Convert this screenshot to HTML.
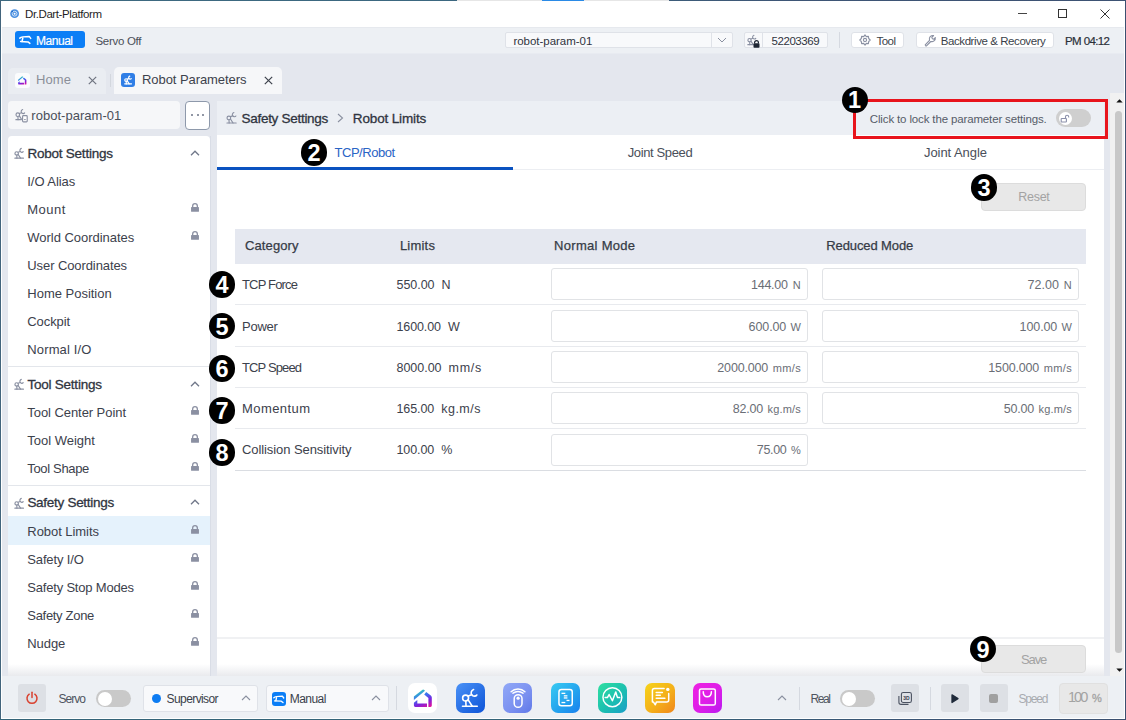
<!DOCTYPE html>
<html><head><meta charset="utf-8"><style>
html,body{margin:0;padding:0;width:1126px;height:720px;overflow:hidden;position:relative;font-family:"Liberation Sans", sans-serif;}
svg{position:absolute;overflow:visible}
</style></head><body>
<div style="position:absolute;left:0px;top:0px;width:1126px;height:720px;background:#e4e7ee"></div>
<div style="position:absolute;left:0px;top:0px;width:1126px;height:27px;background:#ffffff"></div>
<div style="position:absolute;left:0px;top:27px;width:1126px;height:26px;background:#edf0f4"></div>
<div style="position:absolute;left:0px;top:27px;width:1126px;height:1px;background:#e6e9ee"></div>
<div style="position:absolute;left:0px;top:53px;width:1126px;height:1px;background:#e8ebf1"></div>
<div style="position:absolute;left:0px;top:676px;width:1126px;height:44px;background:#edf0f4"></div>
<div style="position:absolute;left:0px;top:0px;width:1126px;height:1px;background:linear-gradient(90deg,#3d6a80,#3b6780 40%,#3e5676 70%,#3d5273)"></div>
<div style="position:absolute;left:457px;top:0px;width:85px;height:1px;background:#e6e6e6"></div>
<div style="position:absolute;left:542px;top:0px;width:42px;height:1px;background:#2a8ae6"></div>
<div style="position:absolute;left:584px;top:0px;width:85px;height:1px;background:#e6e6e6"></div>
<div style="position:absolute;left:0px;top:0px;width:1px;height:720px;background:#42647c"></div>
<div style="position:absolute;left:1125px;top:0px;width:1px;height:720px;background:#3b5070"></div>
<div style="position:absolute;left:0px;top:719px;width:1126px;height:1px;background:linear-gradient(90deg,#346478,#346478 50%,#3a5575 80%,#3b5070)"></div>
<div style="position:absolute;left:1px;top:718px;width:1124px;height:1px;background:#ffffff"></div>
<div style="position:absolute;left:1px;top:27px;width:1px;height:692px;background:#ffffff"></div>
<div style="position:absolute;left:1124px;top:27px;width:1px;height:692px;background:#ffffff"></div>
<svg style="left:9.5px;top:9px" width="10" height="10" viewBox="0 0 10 10"><circle cx="4.6" cy="4.7" r="4.4" fill="#4a8fe0"/><circle cx="4.6" cy="4.7" r="2.4" fill="none" stroke="#cfe2f8" stroke-width="1"/><circle cx="4.6" cy="4.7" r="1" fill="#fff"/><circle cx="2.2" cy="2.6" r="0.8" fill="#1a66c8"/></svg>
<div style="position:absolute;left:25.00px;top:9.00px;font-size:11.5px;line-height:11.5px;color:#1f1f1f;font-weight:400;white-space:pre;letter-spacing:-0.405px;">Dr.Dart-Platform</div>
<div style="position:absolute;left:1018px;top:12.5px;width:9px;height:1px;background:#444"></div>
<div style="position:absolute;left:1058px;top:9px;width:9px;height:9px;border:1px solid #333;box-sizing:border-box"></div>
<svg style="left:1100px;top:9px" width="10" height="10" viewBox="0 0 10 10"><path d="M0.5 0.5L9.5 9.5M9.5 0.5L0.5 9.5" stroke="#333" stroke-width="1"/></svg>
<div style="position:absolute;left:15px;top:31px;width:70px;height:17px;background:#0b7ef6;border-radius:3px"></div>
<div style="position:absolute;left:36.00px;top:35.00px;font-size:12px;line-height:12px;color:#ffffff;font-weight:400;white-space:pre;letter-spacing:-0.472px;-webkit-text-stroke:0.2px #fff">Manual</div>
<div style="position:absolute;left:95.50px;top:36.00px;font-size:11.5px;line-height:11.5px;color:#4a4f58;font-weight:400;white-space:pre;letter-spacing:-0.296px;">Servo Off</div>
<div style="position:absolute;left:505px;top:32px;width:228px;height:16px;background:#f8f9fb;border:1px solid #dfe2e8;box-sizing:border-box;border-radius:2px"></div>
<div style="position:absolute;left:711px;top:32px;width:1px;height:16px;background:#dfe2e8"></div>
<svg style="left:717px;top:37px" width="10" height="6" viewBox="0 0 10 6"><path d="M1 1L5 5L9 1" stroke="#8a90a0" stroke-width="1" fill="none"/></svg>
<div style="position:absolute;left:513.40px;top:36.00px;font-size:11.5px;line-height:11.5px;color:#2f3440;font-weight:400;white-space:pre;letter-spacing:-0.020px;">robot-param-01</div>
<div style="position:absolute;left:744px;top:32px;width:84px;height:16px;background:#f8f9fb;border:1px solid #dfe2e8;box-sizing:border-box;border-radius:2px"></div>
<div style="position:absolute;left:762px;top:32px;width:1px;height:16px;background:#dfe2e8"></div>
<div style="position:absolute;left:771.60px;top:36.00px;font-size:11.5px;line-height:11.5px;color:#2f3440;font-weight:400;white-space:pre;letter-spacing:-0.452px;">52203369</div>
<div style="position:absolute;left:839px;top:32px;width:1px;height:16px;background:#d5d9e0"></div>
<div style="position:absolute;left:851px;top:32px;width:53px;height:16px;background:#ffffff;border:1px solid #dfe2e8;box-sizing:border-box;border-radius:3px"></div>
<div style="position:absolute;left:876.40px;top:36.00px;font-size:11.5px;line-height:11.5px;color:#3a3f4a;font-weight:400;white-space:pre;letter-spacing:-0.499px;">Tool</div>
<div style="position:absolute;left:916px;top:32px;width:138px;height:16px;background:#ffffff;border:1px solid #dfe2e8;box-sizing:border-box;border-radius:3px"></div>
<div style="position:absolute;left:940.80px;top:36.00px;font-size:11.5px;line-height:11.5px;color:#3a3f4a;font-weight:400;white-space:pre;letter-spacing:-0.428px;">Backdrive &amp; Recovery</div>
<div style="position:absolute;left:1065.00px;top:36.00px;font-size:11.5px;line-height:11.5px;color:#2a2f38;font-weight:400;white-space:pre;letter-spacing:-0.603px;-webkit-text-stroke:0.2px #2a2f38">PM 04:12</div>
<div style="position:absolute;left:8px;top:68px;width:98px;height:26px;background:#eaedf2;border-radius:5px 5px 0 0"></div>
<div style="position:absolute;left:110px;top:74px;width:1px;height:13px;background:#d3d7de"></div>
<div style="position:absolute;left:114px;top:67px;width:168px;height:27px;background:#f6f7f9;border-radius:5px 5px 0 0"></div>
<div style="position:absolute;left:36.00px;top:73.00px;font-size:13px;line-height:13px;color:#8a8f99;font-weight:400;white-space:pre;letter-spacing:0.107px;">Home</div>
<div style="position:absolute;left:142.00px;top:73.00px;font-size:13px;line-height:13px;color:#3d424c;font-weight:400;white-space:pre;letter-spacing:-0.066px;">Robot Parameters</div>
<div style="position:absolute;left:120.7px;top:73px;width:14px;height:14px;background:#2f7ee6;border-radius:3px"></div>
<div style="position:absolute;left:8px;top:101px;width:172px;height:28px;background:#f6f7f9;border-radius:4px"></div>
<div style="position:absolute;left:31.30px;top:109.00px;font-size:13px;line-height:13px;color:#4a4f5a;font-weight:400;white-space:pre;letter-spacing:0.031px;">robot-param-01</div>
<div style="position:absolute;left:185px;top:101px;width:25px;height:29px;background:#ffffff;border:1px solid #8e99ab;box-sizing:border-box;border-radius:4px"></div>
<div style="position:absolute;left:8px;top:136px;width:202px;height:540px;background:#ffffff;border-radius:4px 4px 0 0"></div>
<div style="position:absolute;left:27.40px;top:147.00px;font-size:13.5px;line-height:13.5px;color:#2f3440;font-weight:400;white-space:pre;letter-spacing:-0.227px;-webkit-text-stroke:0.3px #2f3440">Robot Settings</div>
<div style="position:absolute;left:27.40px;top:378.00px;font-size:13.5px;line-height:13.5px;color:#2f3440;font-weight:400;white-space:pre;letter-spacing:-0.225px;-webkit-text-stroke:0.3px #2f3440">Tool Settings</div>
<div style="position:absolute;left:27.40px;top:496.00px;font-size:13.5px;line-height:13.5px;color:#2f3440;font-weight:400;white-space:pre;letter-spacing:-0.286px;-webkit-text-stroke:0.3px #2f3440">Safety Settings</div>
<div style="position:absolute;left:8px;top:516px;width:202px;height:29px;background:#e5f2fc"></div>
<div style="position:absolute;left:27.30px;top:175.00px;font-size:13px;line-height:13px;color:#3c414c;font-weight:400;white-space:pre;letter-spacing:-0.051px;">I/O Alias</div>
<div style="position:absolute;left:27.30px;top:203.00px;font-size:13px;line-height:13px;color:#3c414c;font-weight:400;white-space:pre;letter-spacing:0.467px;">Mount</div>
<svg style="left:190px;top:203.2px" width="10" height="10" viewBox="0 0 10 10"><path d="M2.65 4.3V3A2.35 2.35 0 0 1 7.35 3V4.3" stroke="#8b90a2" stroke-width="1.3" fill="none"/><rect x="1.05" y="4.1" width="7.9" height="4.7" rx="0.6" fill="#8b90a2"/></svg>
<div style="position:absolute;left:27.30px;top:231.00px;font-size:13px;line-height:13px;color:#3c414c;font-weight:400;white-space:pre;letter-spacing:-0.026px;">World Coordinates</div>
<svg style="left:190px;top:231.2px" width="10" height="10" viewBox="0 0 10 10"><path d="M2.65 4.3V3A2.35 2.35 0 0 1 7.35 3V4.3" stroke="#8b90a2" stroke-width="1.3" fill="none"/><rect x="1.05" y="4.1" width="7.9" height="4.7" rx="0.6" fill="#8b90a2"/></svg>
<div style="position:absolute;left:27.30px;top:259.00px;font-size:13px;line-height:13px;color:#3c414c;font-weight:400;white-space:pre;letter-spacing:-0.090px;">User Coordinates</div>
<div style="position:absolute;left:27.30px;top:287.00px;font-size:13px;line-height:13px;color:#3c414c;font-weight:400;white-space:pre;letter-spacing:-0.012px;">Home Position</div>
<div style="position:absolute;left:27.30px;top:315.00px;font-size:13px;line-height:13px;color:#3c414c;font-weight:400;white-space:pre;letter-spacing:-0.091px;">Cockpit</div>
<div style="position:absolute;left:27.30px;top:343.00px;font-size:13px;line-height:13px;color:#3c414c;font-weight:400;white-space:pre;letter-spacing:0.129px;">Normal I/O</div>
<div style="position:absolute;left:27.30px;top:406.00px;font-size:13px;line-height:13px;color:#3c414c;font-weight:400;white-space:pre;letter-spacing:-0.064px;">Tool Center Point</div>
<svg style="left:190px;top:406.2px" width="10" height="10" viewBox="0 0 10 10"><path d="M2.65 4.3V3A2.35 2.35 0 0 1 7.35 3V4.3" stroke="#8b90a2" stroke-width="1.3" fill="none"/><rect x="1.05" y="4.1" width="7.9" height="4.7" rx="0.6" fill="#8b90a2"/></svg>
<div style="position:absolute;left:27.30px;top:434.00px;font-size:13px;line-height:13px;color:#3c414c;font-weight:400;white-space:pre;letter-spacing:-0.019px;">Tool Weight</div>
<svg style="left:190px;top:434.3px" width="10" height="10" viewBox="0 0 10 10"><path d="M2.65 4.3V3A2.35 2.35 0 0 1 7.35 3V4.3" stroke="#8b90a2" stroke-width="1.3" fill="none"/><rect x="1.05" y="4.1" width="7.9" height="4.7" rx="0.6" fill="#8b90a2"/></svg>
<div style="position:absolute;left:27.30px;top:462.00px;font-size:13px;line-height:13px;color:#3c414c;font-weight:400;white-space:pre;letter-spacing:-0.339px;">Tool Shape</div>
<svg style="left:190px;top:462.4px" width="10" height="10" viewBox="0 0 10 10"><path d="M2.65 4.3V3A2.35 2.35 0 0 1 7.35 3V4.3" stroke="#8b90a2" stroke-width="1.3" fill="none"/><rect x="1.05" y="4.1" width="7.9" height="4.7" rx="0.6" fill="#8b90a2"/></svg>
<div style="position:absolute;left:27.30px;top:525.00px;font-size:13px;line-height:13px;color:#3c414c;font-weight:400;white-space:pre;letter-spacing:-0.050px;">Robot Limits</div>
<svg style="left:190px;top:525.0px" width="10" height="10" viewBox="0 0 10 10"><path d="M2.65 4.3V3A2.35 2.35 0 0 1 7.35 3V4.3" stroke="#8b90a2" stroke-width="1.3" fill="none"/><rect x="1.05" y="4.1" width="7.9" height="4.7" rx="0.6" fill="#8b90a2"/></svg>
<div style="position:absolute;left:27.30px;top:553.00px;font-size:13px;line-height:13px;color:#3c414c;font-weight:400;white-space:pre;letter-spacing:-0.145px;">Safety I/O</div>
<svg style="left:190px;top:553.1px" width="10" height="10" viewBox="0 0 10 10"><path d="M2.65 4.3V3A2.35 2.35 0 0 1 7.35 3V4.3" stroke="#8b90a2" stroke-width="1.3" fill="none"/><rect x="1.05" y="4.1" width="7.9" height="4.7" rx="0.6" fill="#8b90a2"/></svg>
<div style="position:absolute;left:27.30px;top:581.00px;font-size:13px;line-height:13px;color:#3c414c;font-weight:400;white-space:pre;letter-spacing:-0.196px;">Safety Stop Modes</div>
<svg style="left:190px;top:581.2px" width="10" height="10" viewBox="0 0 10 10"><path d="M2.65 4.3V3A2.35 2.35 0 0 1 7.35 3V4.3" stroke="#8b90a2" stroke-width="1.3" fill="none"/><rect x="1.05" y="4.1" width="7.9" height="4.7" rx="0.6" fill="#8b90a2"/></svg>
<div style="position:absolute;left:27.30px;top:609.00px;font-size:13px;line-height:13px;color:#3c414c;font-weight:400;white-space:pre;letter-spacing:-0.310px;">Safety Zone</div>
<svg style="left:190px;top:609.3px" width="10" height="10" viewBox="0 0 10 10"><path d="M2.65 4.3V3A2.35 2.35 0 0 1 7.35 3V4.3" stroke="#8b90a2" stroke-width="1.3" fill="none"/><rect x="1.05" y="4.1" width="7.9" height="4.7" rx="0.6" fill="#8b90a2"/></svg>
<div style="position:absolute;left:27.30px;top:637.00px;font-size:13px;line-height:13px;color:#3c414c;font-weight:400;white-space:pre;letter-spacing:-0.077px;">Nudge</div>
<svg style="left:190px;top:637.4px" width="10" height="10" viewBox="0 0 10 10"><path d="M2.65 4.3V3A2.35 2.35 0 0 1 7.35 3V4.3" stroke="#8b90a2" stroke-width="1.3" fill="none"/><rect x="1.05" y="4.1" width="7.9" height="4.7" rx="0.6" fill="#8b90a2"/></svg>
<div style="position:absolute;left:8px;top:366px;width:202px;height:1px;background:#e3e6eb"></div>
<div style="position:absolute;left:8px;top:485px;width:202px;height:1px;background:#e3e6eb"></div>
<div style="position:absolute;left:217px;top:101px;width:887px;height:575px;background:#ffffff"></div>
<div style="position:absolute;left:210px;top:136px;width:1px;height:540px;background:#d9dde6"></div>
<div style="position:absolute;left:217px;top:101px;width:887px;height:34px;background:#eceff4"></div>
<div style="position:absolute;left:241.50px;top:112.00px;font-size:13.5px;line-height:13.5px;color:#2f3440;font-weight:400;white-space:pre;letter-spacing:-0.286px;-webkit-text-stroke:0.3px #2f3440">Safety Settings</div>
<div style="position:absolute;left:352.80px;top:112.00px;font-size:13.5px;line-height:13.5px;color:#2f3440;font-weight:400;white-space:pre;letter-spacing:-0.139px;-webkit-text-stroke:0.3px #2f3440">Robot Limits</div>
<svg style="left:337px;top:113px" width="7" height="10" viewBox="0 0 7 10"><path d="M1 1L5.5 5L1 9" stroke="#8a90a0" stroke-width="1.1" fill="none"/></svg>
<div style="position:absolute;left:853px;top:99px;width:255px;height:40px;border:3px solid #e8141c;box-sizing:border-box"></div>
<div style="position:absolute;left:869.80px;top:114.00px;font-size:11.5px;line-height:11.5px;color:#565c68;font-weight:400;white-space:pre;letter-spacing:-0.143px;">Click to lock the parameter settings.</div>
<div style="position:absolute;left:1056px;top:109px;width:35px;height:18px;background:#cfcfcf;border-radius:9px"></div>
<div style="position:absolute;left:1058.9px;top:111.5px;width:13.2px;height:13.2px;background:#ffffff;border-radius:50%"></div>
<div style="position:absolute;left:334.50px;top:146.00px;font-size:13px;line-height:13px;color:#2a64c5;font-weight:400;white-space:pre;letter-spacing:-0.475px;">TCP/Robot</div>
<div style="position:absolute;left:627.70px;top:146.00px;font-size:13px;line-height:13px;color:#4a4f5a;font-weight:400;white-space:pre;letter-spacing:-0.366px;">Joint Speed</div>
<div style="position:absolute;left:924.00px;top:146.00px;font-size:13px;line-height:13px;color:#4a4f5a;font-weight:400;white-space:pre;letter-spacing:-0.060px;">Joint Angle</div>
<div style="position:absolute;left:217px;top:169px;width:887px;height:1px;background:#eceef2"></div>
<div style="position:absolute;left:217px;top:167px;width:296px;height:2.5px;background:#0a52c0"></div>
<div style="position:absolute;left:981px;top:183px;width:105px;height:28px;background:#e8e8e8;border:1px solid #dcdcdc;box-sizing:border-box;border-radius:4px"></div>
<div style="position:absolute;left:1018.30px;top:191.00px;font-size:12.5px;line-height:12.5px;color:#a3a3a3;font-weight:400;white-space:pre;letter-spacing:-0.289px;">Reset</div>
<div style="position:absolute;left:235px;top:229px;width:851px;height:35px;background:#e5e8f0"></div>
<div style="position:absolute;left:245.00px;top:239.00px;font-size:13px;line-height:13px;color:#363b46;font-weight:400;white-space:pre;letter-spacing:0.107px;-webkit-text-stroke:0.25px #363b46">Category</div>
<div style="position:absolute;left:399.90px;top:239.00px;font-size:13px;line-height:13px;color:#363b46;font-weight:400;white-space:pre;letter-spacing:0.210px;-webkit-text-stroke:0.25px #363b46">Limits</div>
<div style="position:absolute;left:554.10px;top:239.00px;font-size:13px;line-height:13px;color:#363b46;font-weight:400;white-space:pre;letter-spacing:0.297px;-webkit-text-stroke:0.25px #363b46">Normal Mode</div>
<div style="position:absolute;left:826.30px;top:239.00px;font-size:13px;line-height:13px;color:#363b46;font-weight:400;white-space:pre;letter-spacing:-0.106px;-webkit-text-stroke:0.25px #363b46">Reduced Mode</div>
<div style="position:absolute;left:235px;top:304px;width:851px;height:1px;background:#e8eaee"></div>
<div style="position:absolute;left:235px;top:346px;width:851px;height:1px;background:#e8eaee"></div>
<div style="position:absolute;left:235px;top:387px;width:851px;height:1px;background:#e8eaee"></div>
<div style="position:absolute;left:235px;top:428px;width:851px;height:1px;background:#e8eaee"></div>
<div style="position:absolute;left:235px;top:470px;width:851px;height:1px;background:#dadde2"></div>
<div style="position:absolute;left:242.00px;top:278.00px;font-size:13px;line-height:13px;color:#3c414c;font-weight:400;white-space:pre;letter-spacing:-0.826px;">TCP Force</div>
<div style="position:absolute;left:396.50px;top:279.00px;font-size:12.5px;line-height:12.5px;color:#3c414c;font-weight:400;white-space:pre;letter-spacing:-0.046px;">550.00</div>
<div style="position:absolute;left:441.50px;top:279.00px;font-size:12.5px;line-height:12.5px;color:#3c414c;font-weight:400;white-space:pre;">N</div>
<div style="position:absolute;left:551px;top:268px;width:257px;height:32px;background:#fff;border:1px solid #e1e3e6;box-sizing:border-box;border-radius:3px"></div>
<div style="position:absolute;left:792.86px;top:280.00px;font-size:11px;line-height:11px;color:#6a6e76;font-weight:400;white-space:pre;">N</div>
<div style="position:absolute;left:751.06px;top:279.00px;font-size:12.5px;line-height:12.5px;color:#6a6e76;font-weight:400;white-space:pre;letter-spacing:-0.286px;">144.00</div>
<div style="position:absolute;left:822px;top:268px;width:257px;height:32px;background:#fff;border:1px solid #e1e3e6;box-sizing:border-box;border-radius:3px"></div>
<div style="position:absolute;left:1063.86px;top:280.00px;font-size:11px;line-height:11px;color:#6a6e76;font-weight:400;white-space:pre;">N</div>
<div style="position:absolute;left:1027.57px;top:279.00px;font-size:12.5px;line-height:12.5px;color:#6a6e76;font-weight:400;white-space:pre;">72.00</div>
<div style="position:absolute;left:242.00px;top:320.00px;font-size:13px;line-height:13px;color:#3c414c;font-weight:400;white-space:pre;letter-spacing:-0.262px;">Power</div>
<div style="position:absolute;left:396.50px;top:321.00px;font-size:12.5px;line-height:12.5px;color:#3c414c;font-weight:400;white-space:pre;letter-spacing:-0.131px;">1600.00</div>
<div style="position:absolute;left:447.90px;top:321.00px;font-size:12.5px;line-height:12.5px;color:#3c414c;font-weight:400;white-space:pre;">W</div>
<div style="position:absolute;left:551px;top:310px;width:257px;height:32px;background:#fff;border:1px solid #e1e3e6;box-sizing:border-box;border-radius:3px"></div>
<div style="position:absolute;left:790.42px;top:322.00px;font-size:11px;line-height:11px;color:#6a6e76;font-weight:400;white-space:pre;">W</div>
<div style="position:absolute;left:748.62px;top:321.00px;font-size:12.5px;line-height:12.5px;color:#6a6e76;font-weight:400;white-space:pre;letter-spacing:-0.106px;">600.00</div>
<div style="position:absolute;left:822px;top:310px;width:257px;height:32px;background:#fff;border:1px solid #e1e3e6;box-sizing:border-box;border-radius:3px"></div>
<div style="position:absolute;left:1061.42px;top:322.00px;font-size:11px;line-height:11px;color:#6a6e76;font-weight:400;white-space:pre;">W</div>
<div style="position:absolute;left:1019.62px;top:321.00px;font-size:12.5px;line-height:12.5px;color:#6a6e76;font-weight:400;white-space:pre;letter-spacing:-0.106px;">100.00</div>
<div style="position:absolute;left:242.00px;top:361.00px;font-size:13px;line-height:13px;color:#3c414c;font-weight:400;white-space:pre;letter-spacing:-0.871px;">TCP Speed</div>
<div style="position:absolute;left:396.50px;top:362.00px;font-size:12.5px;line-height:12.5px;color:#3c414c;font-weight:400;white-space:pre;letter-spacing:-0.031px;">8000.00</div>
<div style="position:absolute;left:448.50px;top:362.00px;font-size:12.5px;line-height:12.5px;color:#3c414c;font-weight:400;white-space:pre;letter-spacing:0.717px;">mm/s</div>
<div style="position:absolute;left:551px;top:351px;width:257px;height:32px;background:#fff;border:1px solid #e1e3e6;box-sizing:border-box;border-radius:3px"></div>
<div style="position:absolute;left:772.80px;top:363.00px;font-size:11px;line-height:11px;color:#6a6e76;font-weight:400;white-space:pre;letter-spacing:0.372px;">mm/s</div>
<div style="position:absolute;left:717.30px;top:362.00px;font-size:12.5px;line-height:12.5px;color:#6a6e76;font-weight:400;white-space:pre;letter-spacing:-0.162px;">2000.000</div>
<div style="position:absolute;left:822px;top:351px;width:257px;height:32px;background:#fff;border:1px solid #e1e3e6;box-sizing:border-box;border-radius:3px"></div>
<div style="position:absolute;left:1043.80px;top:363.00px;font-size:11px;line-height:11px;color:#6a6e76;font-weight:400;white-space:pre;letter-spacing:0.372px;">mm/s</div>
<div style="position:absolute;left:988.30px;top:362.00px;font-size:12.5px;line-height:12.5px;color:#6a6e76;font-weight:400;white-space:pre;letter-spacing:-0.162px;">1500.000</div>
<div style="position:absolute;left:242.00px;top:402.00px;font-size:13px;line-height:13px;color:#3c414c;font-weight:400;white-space:pre;letter-spacing:0.426px;">Momentum</div>
<div style="position:absolute;left:396.50px;top:403.00px;font-size:12.5px;line-height:12.5px;color:#3c414c;font-weight:400;white-space:pre;letter-spacing:-0.106px;">165.00</div>
<div style="position:absolute;left:441.20px;top:403.00px;font-size:12.5px;line-height:12.5px;color:#3c414c;font-weight:400;white-space:pre;letter-spacing:0.498px;">kg.m/s</div>
<div style="position:absolute;left:551px;top:392px;width:257px;height:32px;background:#fff;border:1px solid #e1e3e6;box-sizing:border-box;border-radius:3px"></div>
<div style="position:absolute;left:767.50px;top:404.00px;font-size:11px;line-height:11px;color:#6a6e76;font-weight:400;white-space:pre;letter-spacing:0.181px;">kg.m/s</div>
<div style="position:absolute;left:732.80px;top:403.00px;font-size:12.5px;line-height:12.5px;color:#6a6e76;font-weight:400;white-space:pre;letter-spacing:-0.195px;">82.00</div>
<div style="position:absolute;left:822px;top:392px;width:257px;height:32px;background:#fff;border:1px solid #e1e3e6;box-sizing:border-box;border-radius:3px"></div>
<div style="position:absolute;left:1038.50px;top:404.00px;font-size:11px;line-height:11px;color:#6a6e76;font-weight:400;white-space:pre;letter-spacing:0.181px;">kg.m/s</div>
<div style="position:absolute;left:1003.80px;top:403.00px;font-size:12.5px;line-height:12.5px;color:#6a6e76;font-weight:400;white-space:pre;letter-spacing:-0.195px;">50.00</div>
<div style="position:absolute;left:242.00px;top:443.00px;font-size:13px;line-height:13px;color:#3c414c;font-weight:400;white-space:pre;letter-spacing:-0.083px;">Collision Sensitivity</div>
<div style="position:absolute;left:396.50px;top:444.00px;font-size:12.5px;line-height:12.5px;color:#3c414c;font-weight:400;white-space:pre;letter-spacing:-0.106px;">100.00</div>
<div style="position:absolute;left:441.20px;top:444.00px;font-size:12.5px;line-height:12.5px;color:#3c414c;font-weight:400;white-space:pre;">%</div>
<div style="position:absolute;left:551px;top:434px;width:257px;height:32px;background:#fff;border:1px solid #e1e3e6;box-sizing:border-box;border-radius:3px"></div>
<div style="position:absolute;left:791.02px;top:445.00px;font-size:11px;line-height:11px;color:#6a6e76;font-weight:400;white-space:pre;">%</div>
<div style="position:absolute;left:756.82px;top:444.00px;font-size:12.5px;line-height:12.5px;color:#6a6e76;font-weight:400;white-space:pre;letter-spacing:-0.320px;">75.00</div>
<div style="position:absolute;left:1110px;top:93px;width:14px;height:583px;background:#f1f1f1"></div>
<div style="position:absolute;left:1115px;top:111px;width:7px;height:542px;background:#c8c8c8;border-radius:4px"></div>
<svg style="left:1115.5px;top:99px" width="7" height="4" viewBox="0 0 7 4"><path d="M0.3 3.6L3.5 0.3L6.7 3.6Z" fill="#111"/></svg>
<svg style="left:1115.5px;top:668px" width="7" height="4" viewBox="0 0 7 4"><path d="M0.3 0.4L3.5 3.7L6.7 0.4Z" fill="#111"/></svg>
<div style="position:absolute;left:217px;top:637px;width:887px;height:2px;background:#f0f1f3"></div>
<div style="position:absolute;left:217px;top:664px;width:887px;height:12px;background:linear-gradient(rgba(233,234,237,0),#e9eaed)"></div>
<div style="position:absolute;left:8px;top:664px;width:202px;height:12px;background:linear-gradient(rgba(233,234,237,0),#e9eaed)"></div>
<div style="position:absolute;left:981px;top:645px;width:105px;height:28px;background:#e8e8e8;border:1px solid #dcdcdc;box-sizing:border-box;border-radius:4px"></div>
<div style="position:absolute;left:1021.00px;top:653.00px;font-size:13px;line-height:13px;color:#a3a3a3;font-weight:400;white-space:pre;letter-spacing:-1.111px;">Save</div>
<div style="position:absolute;left:18px;top:684px;width:28px;height:28px;background:#dde0e5;border-radius:3px"></div>
<svg style="left:25px;top:691px" width="14" height="14" viewBox="0 0 14 14"><path d="M4.2 3.2A5 5 0 1 0 9.8 3.2" stroke="#d9412f" stroke-width="1.5" fill="none" stroke-linecap="round"/><path d="M7 1.2V6.5" stroke="#d9412f" stroke-width="1.5" stroke-linecap="round"/></svg>
<div style="position:absolute;left:58.50px;top:693.00px;font-size:12px;line-height:12px;color:#4f5560;font-weight:400;white-space:pre;letter-spacing:-0.962px;">Servo</div>
<div style="position:absolute;left:96px;top:690px;width:35px;height:17px;background:#c9c9c9;border-radius:9px"></div>
<div style="position:absolute;left:97.5px;top:691.5px;width:14px;height:14px;background:#fff;border-radius:7px"></div>
<div style="position:absolute;left:143px;top:684.5px;width:115px;height:27px;background:#f8f9fb;border:1px solid #dfe2e8;box-sizing:border-box;border-radius:3px"></div>
<div style="position:absolute;left:152px;top:694.2px;width:9px;height:9px;background:#0d7cf2;border-radius:5px"></div>
<div style="position:absolute;left:166.60px;top:693.00px;font-size:12px;line-height:12px;color:#3a3f4a;font-weight:400;white-space:pre;letter-spacing:-0.595px;">Supervisor</div>
<div style="position:absolute;left:266px;top:684.5px;width:122.5px;height:27px;background:#f8f9fb;border:1px solid #dfe2e8;box-sizing:border-box;border-radius:3px"></div>
<div style="position:absolute;left:272.2px;top:691.5px;width:14px;height:14px;background:#0b7ef6;border-radius:3px"></div>
<div style="position:absolute;left:289.80px;top:693.00px;font-size:12px;line-height:12px;color:#3a3f4a;font-weight:400;white-space:pre;letter-spacing:-0.552px;">Manual</div>
<svg style="left:241px;top:695px" width="10" height="6" viewBox="0 0 10 6"><path d="M1 5L5 1L9 5" stroke="#8a90a0" stroke-width="1.1" fill="none"/></svg>
<svg style="left:371px;top:695px" width="10" height="6" viewBox="0 0 10 6"><path d="M1 5L5 1L9 5" stroke="#8a90a0" stroke-width="1.1" fill="none"/></svg>
<div style="position:absolute;left:396px;top:686px;width:1px;height:24px;background:#d5d9e0"></div>
<div style="position:absolute;left:408px;top:683.3px;width:29.3px;height:29.5px;background:#ffffff;border-radius:7px"></div>
<div style="position:absolute;left:455.8px;top:683.3px;width:29.3px;height:29.5px;background:linear-gradient(135deg,#4a92f7,#1f66e0 70%,#0f55d8);border-radius:7px"></div>
<div style="position:absolute;left:503px;top:683.3px;width:29.3px;height:29.5px;background:linear-gradient(135deg,#91a8f7,#7a90f0 60%,#5f78e8);border-radius:7px"></div>
<div style="position:absolute;left:551px;top:683.3px;width:29.3px;height:29.5px;background:linear-gradient(135deg,#38cbf2,#22a0ee 60%,#1a80ee);border-radius:7px"></div>
<div style="position:absolute;left:598px;top:683.3px;width:29.3px;height:29.5px;background:linear-gradient(135deg,#2fe0a0,#1cbfb0 55%,#1a9ec8);border-radius:7px"></div>
<div style="position:absolute;left:645.3px;top:683.3px;width:29.3px;height:29.5px;background:linear-gradient(135deg,#f6d41a,#f4b01a 55%,#f0861c);border-radius:7px"></div>
<div style="position:absolute;left:692.8px;top:683.3px;width:29.3px;height:29.5px;background:linear-gradient(135deg,#ee22e2,#dd1ee8 55%,#b91af0);border-radius:7px"></div>
<svg style="left:777px;top:695px" width="10" height="6" viewBox="0 0 10 6"><path d="M1 5L5 1L9 5" stroke="#8a90a0" stroke-width="1.1" fill="none"/></svg>
<div style="position:absolute;left:799px;top:687px;width:1px;height:23px;background:#d5d9e0"></div>
<div style="position:absolute;left:810.50px;top:693.00px;font-size:12px;line-height:12px;color:#4f5560;font-weight:400;white-space:pre;letter-spacing:-1.394px;">Real</div>
<div style="position:absolute;left:840px;top:690px;width:35px;height:17px;background:#c9c9c9;border-radius:9px"></div>
<div style="position:absolute;left:841.5px;top:691.5px;width:14px;height:14px;background:#fff;border-radius:7px"></div>
<div style="position:absolute;left:891px;top:684px;width:28px;height:28px;background:#dde0e5;border-radius:3px"></div>
<div style="position:absolute;left:930px;top:687px;width:1px;height:23px;background:#d5d9e0"></div>
<div style="position:absolute;left:941px;top:684px;width:28px;height:28px;background:#dde0e5;border-radius:3px"></div>
<svg style="left:950px;top:692.5px" width="10" height="12" viewBox="0 0 10 12"><path d="M2 1.9L8 5.6L2 9.5Z" fill="#1f2a3a" stroke="#1f2a3a" stroke-width="1.3" stroke-linejoin="round"/></svg>
<div style="position:absolute;left:980px;top:684px;width:28px;height:28px;background:#dde0e5;border-radius:3px"></div>
<div style="position:absolute;left:989px;top:694px;width:9px;height:9px;background:#a0a0a0;border-radius:2px"></div>
<div style="position:absolute;left:1018.50px;top:693.00px;font-size:12px;line-height:12px;color:#a8abb0;font-weight:400;white-space:pre;letter-spacing:-1.175px;">Speed</div>
<div style="position:absolute;left:1059px;top:683px;width:48.5px;height:31px;background:#e8e8e8;border:1px solid #e0e0e0;box-sizing:border-box;border-radius:4px"></div>
<div style="position:absolute;left:1068.00px;top:690.00px;font-size:14.5px;line-height:14.5px;color:#a3a3a3;font-weight:400;white-space:pre;letter-spacing:-1.997px;">100</div>
<div style="position:absolute;left:1092.00px;top:693.00px;font-size:11px;line-height:11px;color:#a3a3a3;font-weight:400;white-space:pre;-webkit-text-stroke:0.3px #a3a3a3">%</div>
<div style="position:absolute;left:841.5px;top:86.60000000000001px;width:26.4px;height:26.6px;background:#000;border-radius:50%"></div>
<div style="position:absolute;left:848.10px;top:89.00px;font-size:23.5px;line-height:23.5px;color:#ffffff;font-weight:700;white-space:pre;">1</div>
<div style="position:absolute;left:300.8px;top:139.2px;width:26.4px;height:26.6px;background:#000;border-radius:50%"></div>
<div style="position:absolute;left:307.40px;top:142.00px;font-size:23.5px;line-height:23.5px;color:#ffffff;font-weight:700;white-space:pre;">2</div>
<div style="position:absolute;left:970.8px;top:174.2px;width:26.4px;height:26.6px;background:#000;border-radius:50%"></div>
<div style="position:absolute;left:977.40px;top:177.00px;font-size:23.5px;line-height:23.5px;color:#ffffff;font-weight:700;white-space:pre;">3</div>
<div style="position:absolute;left:208.8px;top:271.2px;width:26.4px;height:26.6px;background:#000;border-radius:50%"></div>
<div style="position:absolute;left:215.40px;top:274.00px;font-size:23.5px;line-height:23.5px;color:#ffffff;font-weight:700;white-space:pre;">4</div>
<div style="position:absolute;left:208.8px;top:312.8px;width:26.4px;height:26.6px;background:#000;border-radius:50%"></div>
<div style="position:absolute;left:215.40px;top:316.00px;font-size:23.5px;line-height:23.5px;color:#ffffff;font-weight:700;white-space:pre;">5</div>
<div style="position:absolute;left:208.8px;top:355.2px;width:26.4px;height:26.6px;background:#000;border-radius:50%"></div>
<div style="position:absolute;left:215.40px;top:358.00px;font-size:23.5px;line-height:23.5px;color:#ffffff;font-weight:700;white-space:pre;">6</div>
<div style="position:absolute;left:208.8px;top:397.09999999999997px;width:26.4px;height:26.6px;background:#000;border-radius:50%"></div>
<div style="position:absolute;left:215.40px;top:400.00px;font-size:23.5px;line-height:23.5px;color:#ffffff;font-weight:700;white-space:pre;">7</div>
<div style="position:absolute;left:208.8px;top:439.2px;width:26.4px;height:26.6px;background:#000;border-radius:50%"></div>
<div style="position:absolute;left:215.40px;top:442.00px;font-size:23.5px;line-height:23.5px;color:#ffffff;font-weight:700;white-space:pre;">8</div>
<div style="position:absolute;left:969.8px;top:635.9000000000001px;width:26.4px;height:26.6px;background:#000;border-radius:50%"></div>
<div style="position:absolute;left:976.40px;top:639.00px;font-size:23.5px;line-height:23.5px;color:#ffffff;font-weight:700;white-space:pre;">9</div>
<svg style="left:19px;top:34px" width="13" height="11" viewBox="0 0 13 11"><g fill="none" stroke="#fff" stroke-width="1.5" stroke-linecap="round" stroke-linejoin="round"><path d="M0.8 4.1Q2.5 2.4 10.2 2.4L11.7 4.4"/><path d="M1.6 7.6L9 7.9L10.9 9.4"/><path d="M3.8 4L3 7.6"/></g></svg>
<svg style="left:14.5px;top:72.5px" width="15" height="15" viewBox="0 0 15 15"><defs><linearGradient id="hg" gradientUnits="userSpaceOnUse" x1="12" y1="6" x2="21" y2="25"><stop offset="0" stop-color="#2fe0ae"/><stop offset="0.38" stop-color="#3b70f2"/><stop offset="0.68" stop-color="#7d22dc"/><stop offset="1" stop-color="#e6119a"/></linearGradient></defs><rect x="0" y="0" width="15" height="15" rx="3" fill="#fbfcfd"/><g fill="url(#hg)" transform="translate(-0.1 0.4) scale(0.464)"><path d="M6.9 13.6L15.2 6.9Q16.2 6.2 17.2 6.9L18 7.8L6.9 17.1Z"/><path d="M19.2 8.9L23.8 12.4Q24.8 13.2 24.8 14.5V22.6Q24.8 23.9 23.5 23.9H21.4V14.9L17.2 11.4Z"/><path d="M6.9 19.7L10.3 16.9V20.4H20V23.9H8.3Q6.9 23.9 6.9 22.5Z"/></g></svg>
<svg style="left:123.52px;top:75.46px" width="8.16" height="9.52" viewBox="-1 -13 12 14"><g fill="none" stroke="#ffffff" stroke-width="1.76" stroke-linecap="round" stroke-linejoin="round"><path d="M0 0H10"/><circle cx="2.1" cy="-5.5" r="2"/><path d="M2.25 -3.5L2.4 0M3.85 -4.3L6.6 0M3.8 -6.9L6.2 -7.7"/><path d="M7.5 -11.35C5.8 -10.8 5.4 -8.6 6.4 -7.7C7 -6.7 8.9 -6.4 9.7 -7.6"/></g></svg>
<svg style="left:88.0px;top:76.3px" width="9" height="9" viewBox="0 0 9 9"><path d="M0.8 0.8L8.2 8.2M8.2 0.8L0.8 8.2" stroke="#6f7480" stroke-width="1.2"/></svg>
<svg style="left:263.7px;top:76.3px" width="9" height="9" viewBox="0 0 9 9"><path d="M0.8 0.8L8.2 8.2M8.2 0.8L0.8 8.2" stroke="#3d424c" stroke-width="1.2"/></svg>
<svg style="left:15.00px;top:108.20px" width="10.80" height="12.60" viewBox="-1 -13 12 14"><g fill="none" stroke="#8a90a2" stroke-width="1.28" stroke-linecap="round" stroke-linejoin="round"><path d="M0 0H5.2"/><circle cx="2.1" cy="-5.5" r="2"/><path d="M2.25 -3.5L2.4 0M3.85 -4.3L6.6 0M3.8 -6.9L6.2 -7.7"/><path d="M7.5 -11.35C5.8 -10.8 5.4 -8.6 6.4 -7.7C7 -6.7 8.9 -6.4 9.7 -7.6"/></g></svg>
<svg style="left:22px;top:115px" width="7" height="8" viewBox="0 0 7 8"><rect x="0.6" y="0.6" width="4.6" height="6.2" rx="0.8" fill="#fff" stroke="#8a90a2" stroke-width="1.15"/><path d="M2 4.6H3.8" stroke="#8a90a2" stroke-width="0.9"/></svg>
<div style="position:absolute;left:191.3px;top:114px;width:2px;height:2px;background:#6d7587;border-radius:1px"></div>
<div style="position:absolute;left:196.5px;top:114px;width:2px;height:2px;background:#6d7587;border-radius:1px"></div>
<div style="position:absolute;left:201.7px;top:114px;width:2px;height:2px;background:#6d7587;border-radius:1px"></div>
<svg style="left:14.44px;top:146.72px" width="10.32" height="12.04" viewBox="-1 -13 12 14"><g fill="none" stroke="#8a90a2" stroke-width="1.34" stroke-linecap="round" stroke-linejoin="round"><path d="M0 0H10"/><circle cx="2.1" cy="-5.5" r="2"/><path d="M2.25 -3.5L2.4 0M3.85 -4.3L6.6 0M3.8 -6.9L6.2 -7.7"/><path d="M7.5 -11.35C5.8 -10.8 5.4 -8.6 6.4 -7.7C7 -6.7 8.9 -6.4 9.7 -7.6"/></g></svg>
<svg style="left:189.5px;top:149.5px" width="10" height="6" viewBox="0 0 10 6"><path d="M1 5.2L5 1.2L9 5.2" stroke="#707789" stroke-width="1.3" fill="none"/></svg>
<svg style="left:14.44px;top:377.82px" width="10.32" height="12.04" viewBox="-1 -13 12 14"><g fill="none" stroke="#8a90a2" stroke-width="1.34" stroke-linecap="round" stroke-linejoin="round"><path d="M0 0H10"/><circle cx="2.1" cy="-5.5" r="2"/><path d="M2.25 -3.5L2.4 0M3.85 -4.3L6.6 0M3.8 -6.9L6.2 -7.7"/><path d="M7.5 -11.35C5.8 -10.8 5.4 -8.6 6.4 -7.7C7 -6.7 8.9 -6.4 9.7 -7.6"/></g></svg>
<svg style="left:189.5px;top:380.6px" width="10" height="6" viewBox="0 0 10 6"><path d="M1 5.2L5 1.2L9 5.2" stroke="#707789" stroke-width="1.3" fill="none"/></svg>
<svg style="left:14.44px;top:496.62px" width="10.32" height="12.04" viewBox="-1 -13 12 14"><g fill="none" stroke="#8a90a2" stroke-width="1.34" stroke-linecap="round" stroke-linejoin="round"><path d="M0 0H10"/><circle cx="2.1" cy="-5.5" r="2"/><path d="M2.25 -3.5L2.4 0M3.85 -4.3L6.6 0M3.8 -6.9L6.2 -7.7"/><path d="M7.5 -11.35C5.8 -10.8 5.4 -8.6 6.4 -7.7C7 -6.7 8.9 -6.4 9.7 -7.6"/></g></svg>
<svg style="left:189.5px;top:499.4px" width="10" height="6" viewBox="0 0 10 6"><path d="M1 5.2L5 1.2L9 5.2" stroke="#707789" stroke-width="1.3" fill="none"/></svg>
<svg style="left:225.57px;top:111.38px" width="11.10" height="12.95" viewBox="-1 -13 12 14"><g fill="none" stroke="#8a90a2" stroke-width="1.24" stroke-linecap="round" stroke-linejoin="round"><path d="M0 0H10"/><circle cx="2.1" cy="-5.5" r="2"/><path d="M2.25 -3.5L2.4 0M3.85 -4.3L6.6 0M3.8 -6.9L6.2 -7.7"/><path d="M7.5 -11.35C5.8 -10.8 5.4 -8.6 6.4 -7.7C7 -6.7 8.9 -6.4 9.7 -7.6"/></g></svg>
<svg style="left:747.18px;top:34.34px" width="9.84" height="11.48" viewBox="-1 -13 12 14"><g fill="none" stroke="#8a90a2" stroke-width="1.34" stroke-linecap="round" stroke-linejoin="round"><path d="M0 0H10"/><circle cx="2.1" cy="-5.5" r="2"/><path d="M2.25 -3.5L2.4 0M3.85 -4.3L6.6 0M3.8 -6.9L6.2 -7.7"/><path d="M7.5 -11.35C5.8 -10.8 5.4 -8.6 6.4 -7.7C7 -6.7 8.9 -6.4 9.7 -7.6"/></g></svg>
<svg style="left:753px;top:39.5px" width="7" height="8" viewBox="0 0 7 8"><path d="M1.6 3.6V2.6A1.9 1.9 0 0 1 5.4 2.6V3.6" stroke="#1e2633" stroke-width="1.2" fill="none"/><rect x="0.5" y="3.2" width="6" height="4.6" rx="0.8" fill="#1e2633"/></svg>
<svg style="left:859px;top:34px" width="12" height="12" viewBox="0 0 12 12"><g fill="none" stroke="#8a90a2" stroke-width="1.1" stroke-linejoin="round"><path d="M6 0.9L7.3 2.6L9.4 2.4L9.7 4.5L11.2 6L9.7 7.5L9.4 9.6L7.3 9.4L6 11.1L4.7 9.4L2.6 9.6L2.3 7.5L0.8 6L2.3 4.5L2.6 2.4L4.7 2.6Z"/><circle cx="6" cy="6" r="1.6"/></g></svg>
<svg style="left:923px;top:34px" width="13" height="12" viewBox="0 0 13 12"><path d="M2.2 10.8L6.5 6.4Q5.8 4.2 7.2 2.6Q8.6 1.2 10.6 1.5L8.8 3.4L9.4 4.8L10.8 5.2L12.3 3.5Q12.6 5.6 11 6.9Q9.6 8 7.8 7.5L3.5 11.9Q2.4 12.3 2.2 10.8Z" fill="none" stroke="#8a90a2" stroke-width="1.1" stroke-linejoin="round"/></svg>
<svg style="left:1060px;top:113.5px" width="10" height="9" viewBox="0 0 10 9"><rect x="1.2" y="4.5" width="5.2" height="3.5" rx="0.6" fill="none" stroke="#8b90aa" stroke-width="1.1"/><path d="M5.5 4.5V2.8A1.6 1.6 0 0 1 8.7 2.8V3.6" fill="none" stroke="#8b90aa" stroke-width="1.1"/></svg>
<svg style="left:897px;top:691px" width="16" height="15" viewBox="0 0 16 15"><g fill="none" stroke="#4b5261" stroke-width="1.1"><rect x="4.4" y="1.5" width="10" height="10" rx="1.8"/><path d="M1.9 5V11.2Q1.9 13.4 4.1 13.4H11.5"/></g><text x="9.4" y="8.6" font-family="Liberation Sans" font-weight="700" font-size="5" fill="#3a404c" text-anchor="middle">3D</text></svg>
<svg style="left:407px;top:683px" width="30" height="30" viewBox="0 0 30 30"><defs><linearGradient id="hg2" gradientUnits="userSpaceOnUse" x1="12" y1="6" x2="21" y2="25"><stop offset="0" stop-color="#2fe0ae"/><stop offset="0.38" stop-color="#3b70f2"/><stop offset="0.68" stop-color="#7d22dc"/><stop offset="1" stop-color="#e6119a"/></linearGradient></defs><g fill="url(#hg2)"><path d="M6.9 13.6L15.2 6.9Q16.2 6.2 17.2 6.9L18 7.8L6.9 17.1Z"/><path d="M19.2 8.9L23.8 12.4Q24.8 13.2 24.8 14.5V22.6Q24.8 23.9 23.5 23.9H21.4V14.9L17.2 11.4Z"/><path d="M6.9 19.7L10.3 16.9V20.4H20V23.9H8.3Q6.9 23.9 6.9 22.5Z"/></g></svg>
<svg style="left:461.42px;top:687.26px" width="17.76" height="20.72" viewBox="-1 -13 12 14"><g fill="none" stroke="#ffffff" stroke-width="1.08" stroke-linecap="round" stroke-linejoin="round"><path d="M0 0H10"/><circle cx="2.1" cy="-5.5" r="2"/><path d="M2.25 -3.5L2.4 0M3.85 -4.3L6.6 0M3.8 -6.9L6.2 -7.7"/><path d="M7.5 -11.35C5.8 -10.8 5.4 -8.6 6.4 -7.7C7 -6.7 8.9 -6.4 9.7 -7.6"/></g></svg>
<svg style="left:502.5px;top:683px" width="30" height="30" viewBox="0 0 30 30"><g fill="none" stroke="#fff" stroke-width="1.5" stroke-linecap="round"><rect x="11.2" y="11.7" width="7.8" height="12.6" rx="3.9"/><path d="M8.1 8.7A9.9 9.9 0 0 1 21.9 8.7"/><path d="M10 10.2A8.6 8.6 0 0 1 20 10.2"/></g><circle cx="15.1" cy="15.2" r="1.6" fill="#fff"/></svg>
<svg style="left:550.5px;top:683px" width="30" height="30" viewBox="0 0 30 30"><rect x="7.95" y="6.5" width="13.3" height="16.25" rx="2.5" fill="none" stroke="#fff" stroke-width="1.5"/><g fill="#fff"><rect x="10.5" y="9.7" width="3.8" height="1.3"/><rect x="12.8" y="12.2" width="3.6" height="1.3"/><rect x="12.8" y="14.3" width="3.6" height="1.3"/><rect x="15.5" y="16.8" width="3" height="1.3"/><rect x="10.5" y="18.9" width="3.8" height="1.3"/></g></svg>
<svg style="left:598px;top:683px" width="30" height="30" viewBox="0 0 30 30"><g fill="none" stroke="#fff" stroke-width="1.5" stroke-linejoin="round" stroke-linecap="round"><circle cx="14.4" cy="14.2" r="9.45"/><path d="M7.1 14.6H9.4L11.1 11.5L14.4 17.75L17.75 9L19.4 14.4L21.7 14.6"/></g></svg>
<svg style="left:645.5px;top:683px" width="30" height="30" viewBox="0 0 30 30"><g fill="none" stroke="#fff" stroke-width="1.5" stroke-linejoin="round" stroke-linecap="round"><path d="M18.1 5.4H8.4Q6.4 5.4 6.4 7.4V18.9H7.3L9.3 21.8L10.5 18.9H20.7Q22.7 18.9 22.7 16.9V10.5"/><path d="M10.2 9.5H16.4M10.2 12.25H14.3M10.2 15.2H18.9"/></g><circle cx="21.8" cy="6.4" r="1.7" fill="#fff"/></svg>
<svg style="left:693px;top:683px" width="30" height="30" viewBox="0 0 30 30"><g fill="none" stroke="#fff" stroke-width="1.5" stroke-linejoin="round" stroke-linecap="round"><rect x="6.5" y="5.9" width="15.8" height="16.2" rx="1.6"/><path d="M10.25 8.8Q10.25 13.8 14.2 13.8Q18.4 13.8 18.4 8.8"/></g></svg>
<svg style="left:273px;top:693.5px" width="12" height="10" viewBox="0 0 13 11"><g fill="none" stroke="#fff" stroke-width="1.5" stroke-linecap="round" stroke-linejoin="round"><path d="M0.8 4.1Q2.5 2.4 10.2 2.4L11.7 4.4"/><path d="M1.6 7.6L9 7.9L10.9 9.4"/><path d="M3.8 4L3 7.6"/></g></svg>
</body></html>
